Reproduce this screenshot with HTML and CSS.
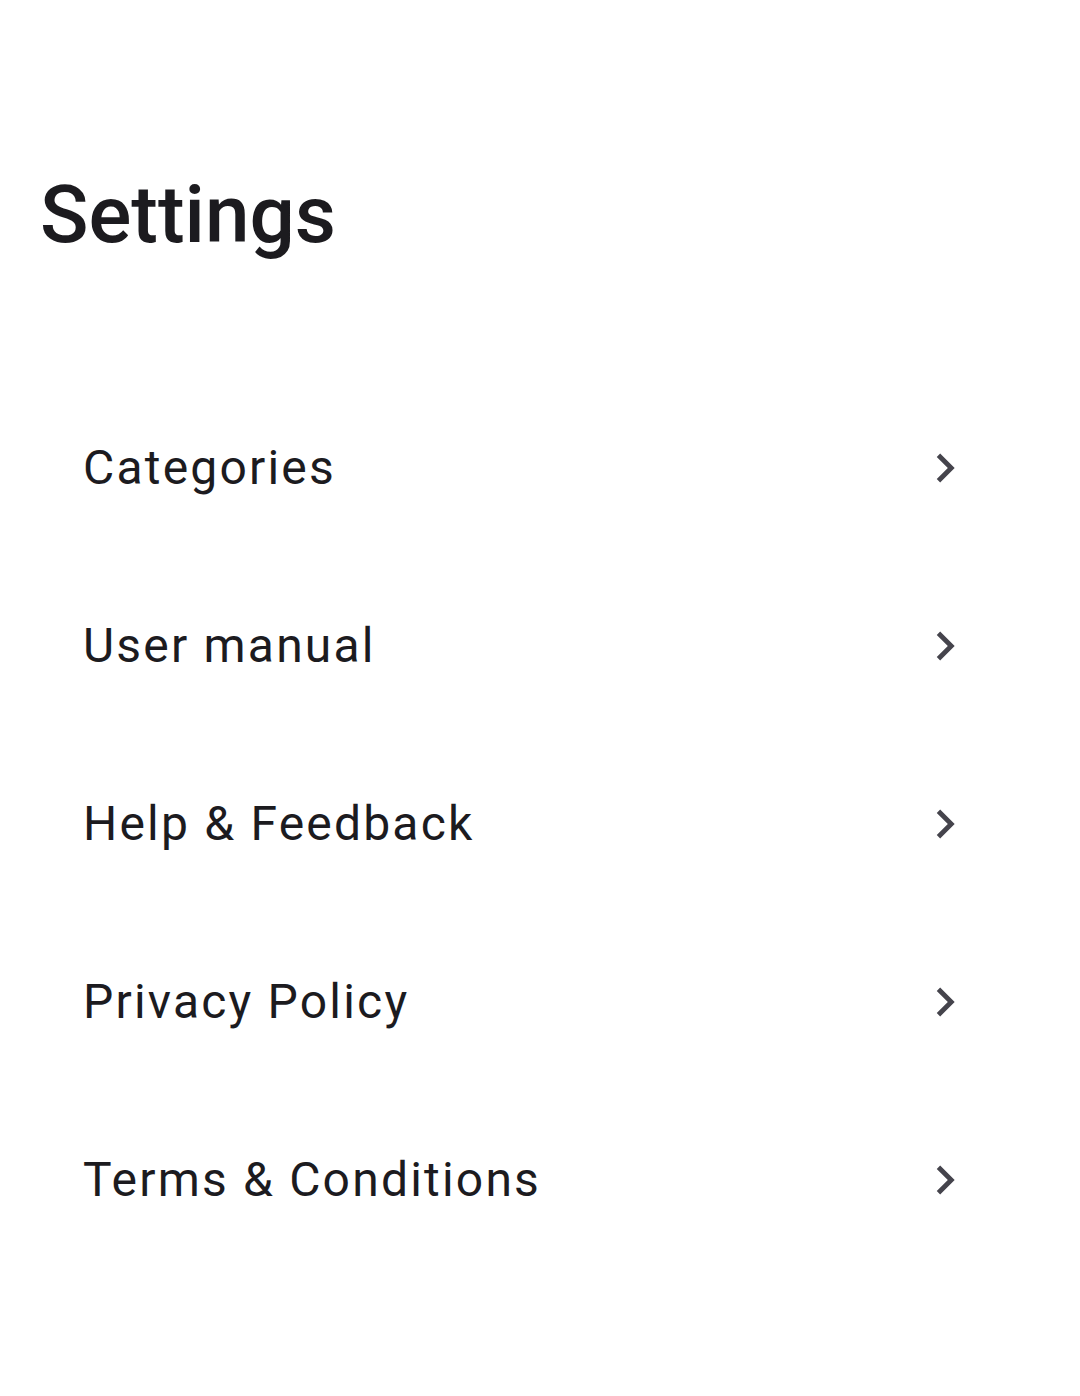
FILE: index.html
```html
<!DOCTYPE html>
<html lang="en">
<head>
<meta charset="utf-8">
<title>Settings</title>
<link rel="stylesheet" href="styles.css">
</head>
<body>
<main class="screen">
  <h1 class="title">Settings</h1>
  <ul class="menu">
    <li class="item"><span class="label">Categories</span><svg class="chev" viewBox="0 0 24 24"><path d="M10 6L8.59 7.41 13.17 12l-4.58 4.59L10 18l6-6z"/></svg></li>
    <li class="item"><span class="label">User manual</span><svg class="chev" viewBox="0 0 24 24"><path d="M10 6L8.59 7.41 13.17 12l-4.58 4.59L10 18l6-6z"/></svg></li>
    <li class="item"><span class="label">Help &amp; Feedback</span><svg class="chev" viewBox="0 0 24 24"><path d="M10 6L8.59 7.41 13.17 12l-4.58 4.59L10 18l6-6z"/></svg></li>
    <li class="item"><span class="label">Privacy Policy</span><svg class="chev" viewBox="0 0 24 24"><path d="M10 6L8.59 7.41 13.17 12l-4.58 4.59L10 18l6-6z"/></svg></li>
    <li class="item"><span class="label">Terms &amp; Conditions</span><svg class="chev" viewBox="0 0 24 24"><path d="M10 6L8.59 7.41 13.17 12l-4.58 4.59L10 18l6-6z"/></svg></li>
  </ul>
</main>
</body>
</html>
```
FILE: styles.css
```css
html, body {
  margin: 0;
  padding: 0;
  background: #ffffff;
}
body {
  font-family: Roboto, "Noto Sans", sans-serif;
  color: #1c1b1f;
}
.screen {
  width: 1080px;
  min-height: 1396px;
  padding-top: 175px;
  box-sizing: border-box;
}
.title {
  margin: 0;
  padding-left: 40px;
  font-size: 80px;
  line-height: 1;
  font-weight: 500;
  letter-spacing: 0;
}
.menu {
  list-style: none;
  margin: 124px 0 0 0;
  padding: 0;
}
.item {
  display: flex;
  align-items: center;
  justify-content: space-between;
  height: 178px;
  padding: 0 106px 0 83px;
}
.label {
  font-size: 48px;
  line-height: 1;
  letter-spacing: 2.2px;
  font-weight: 400;
}
.chev {
  width: 58px;
  height: 58px;
  fill: #45444c;
}
```
